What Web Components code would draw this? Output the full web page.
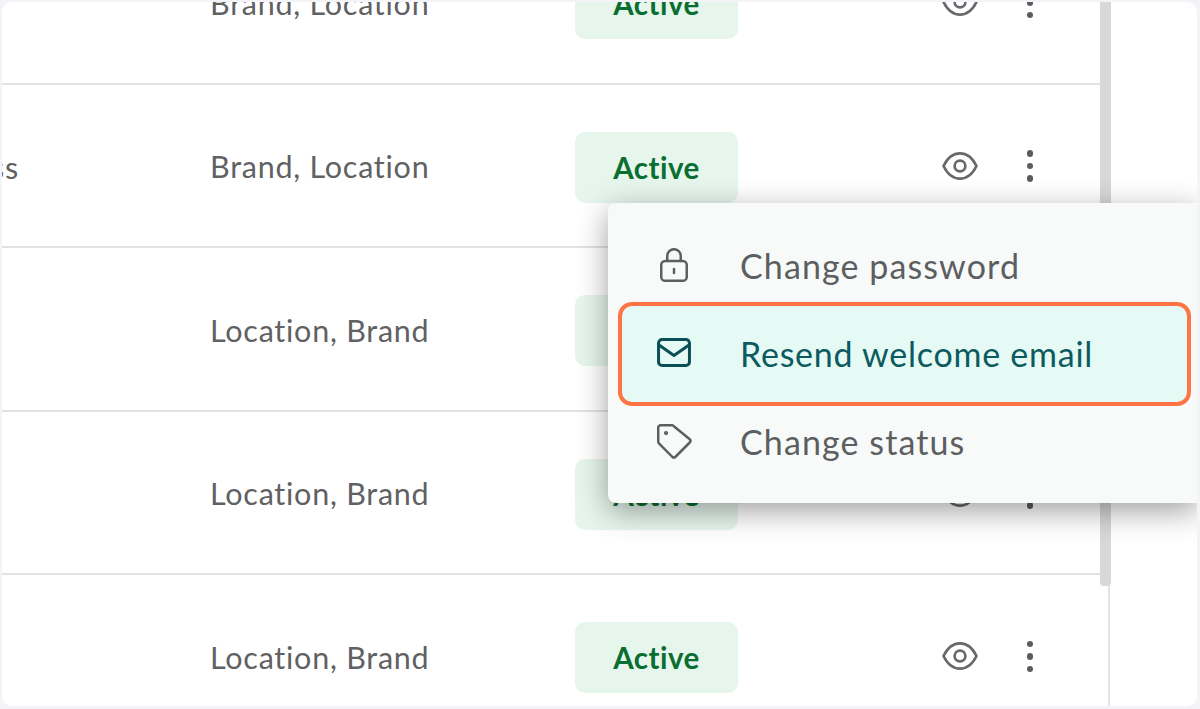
<!DOCTYPE html>
<html>
<head>
<meta charset="utf-8">
<style>
  html, body { margin: 0; height: 100%; overflow: hidden; background: #f3f3f8; }
  body { font-family: "Lato", "Open Sans", sans-serif; }
</style>
</head>
<body>
<app-frame>
  <user-row roles="Brand, Location"></user-row>
  <user-row lead="ss" roles="Brand, Location"></user-row>
  <user-row roles="Location, Brand"></user-row>
  <user-row roles="Location, Brand"></user-row>
  <user-row roles="Location, Brand"></user-row>
  <action-menu slot="menu">
    <menu-item icon="lock">Change password</menu-item>
    <menu-item icon="mail" highlighted>Resend welcome email</menu-item>
    <menu-item icon="tag">Change status</menu-item>
  </action-menu>
</app-frame>

<script>
// Icons shared by the rows and the menu, all on a 24 box
const ICONS = {
  eye: `<path d="M1.6 12C4.2 6.6 7.8 4 12 4s7.8 2.6 10.4 8c-2.6 5.4-6.2 8-10.4 8S4.2 17.4 1.6 12z"/><circle cx="12" cy="12" r="3.4"/>`,
  lock: `<rect x="3.5" y="8.7" width="17" height="13.2" rx="2.6"/><path d="M7.5 8.7V5.3a4.5 4.5 0 0 1 9 0v3.4"/><path d="M12 14v2.6"/>`,
  mail: `<rect x="1.7" y="2.3" width="20.6" height="17.4" rx="2.4"/><path d="M2 6l10 7 10-7"/>`,
  tag: `<path d="M1.5 3A1.5 1.5 0 0 1 3 1.5h7.6a1.5 1.5 0 0 1 1.1.45l10.8 8.85a1.6 1.6 0 0 1 0 2.2L13 22.5a1.6 1.6 0 0 1-2.2 0L1.95 13.6a1.5 1.5 0 0 1-.45-1.1z"/><circle cx="6.7" cy="6.7" r=".6"/>`
};

function icon(name, size, stroke) {
  return `<svg width="${size}" height="${size}" viewBox="0 0 24 24" fill="none" stroke="currentColor" stroke-width="${stroke}" stroke-linecap="round" stroke-linejoin="round">${ICONS[name]}</svg>`;
}

class AppFrame extends HTMLElement {
  constructor() {
    super();
    this.attachShadow({ mode: "open" }).innerHTML = `
      <style>
        :host { display: block; box-sizing: border-box; height: 709px; padding: 2px 3px 3px 2px; }
        .card { position: relative; height: 100%; background: #fff; border-radius: 10px; overflow: hidden; }
        .table { width: 1108px; height: 100%; box-sizing: border-box; border-right: 2px solid #e4e4e4; overflow: hidden; }
        .rows { margin-top: -81px; }
        .scrollbar { position: absolute; left: 1098px; top: 0; width: 11px; height: 584px; background: #d8d8d8; border-radius: 0 0 4px 4px; }
        .menu { position: absolute; left: 606px; top: 201px; }
      </style>
      <div class="card">
        <div class="table"><div class="rows"><slot></slot></div></div>
        <div class="scrollbar"></div>
        <div class="menu"><slot name="menu"></slot></div>
      </div>
    `;
  }
}

class UserRow extends HTMLElement {
  constructor() {
    super();
    this.attachShadow({ mode: "open" });
  }

  connectedCallback() {
    const lead = this.getAttribute("lead") || "";
    const roles = this.getAttribute("roles") || "";
    this.shadowRoot.innerHTML = `
      <style>
        :host { display: grid; grid-template-columns: 208px 365px 163px 1fr; align-items: center; box-sizing: border-box; height: 163.5px; padding-top: 4px; border-bottom: 2px solid #e2e2e2; color: #5f6163; font-size: 30.5px; letter-spacing: .75px; }
        .lead { margin-left: -11px; margin-top: -1px; }
        .roles { margin-top: -2px; }
      </style>
      <div class="lead">${lead}</div>
      <div class="roles">${roles}</div>
      <status-badge>Active</status-badge>
      <row-actions></row-actions>
    `;
  }
}

class StatusBadge extends HTMLElement {
  constructor() {
    super();
    this.attachShadow({ mode: "open" }).innerHTML = `
      <style>
        :host { display: flex; align-items: center; justify-content: center; height: 71px; background: #e6f6ed; border-radius: 10px; color: #0a6e30; font-size: 29.5px; font-weight: 700; letter-spacing: .5px; }
      </style>
      <slot></slot>
    `;
  }
}

class RowActions extends HTMLElement {
  constructor() {
    super();
    this.attachShadow({ mode: "open" }).innerHTML = `
      <style>
        :host { display: flex; align-items: center; gap: 37px; padding-left: 203px; margin-top: -3px; color: #67696c; }
        svg { display: block; }
        .dots { display: flex; flex-direction: column; gap: 6px; }
        .dots i { width: 6.5px; height: 6.5px; border-radius: 50%; background: #5a5c60; }
        .more { width: 28px; display: flex; justify-content: center; }
      </style>
      ${icon("eye", 38, 1.7)}
      <div class="more"><div class="dots"><i></i><i></i><i></i></div></div>
    `;
  }
}

class ActionMenu extends HTMLElement {
  constructor() {
    super();
    this.attachShadow({ mode: "open" }).innerHTML = `
      <style>
        :host { display: flex; flex-direction: column; box-sizing: border-box; width: 590px; height: 300px; padding: 19px 7px 0 10px; background: #f8faf9; border-radius: 8px 0 0 8px; box-shadow: 0 8px 30px rgba(0,0,0,.38); }
      </style>
      <slot></slot>
    `;
  }
}

class MenuItem extends HTMLElement {
  constructor() {
    super();
    this.attachShadow({ mode: "open" });
  }

  connectedCallback() {
    this.shadowRoot.innerHTML = `
      <style>
        :host { display: flex; align-items: center; box-sizing: border-box; height: 88px; padding: 0 0 2px 38px; gap: 48px; color: #5c5f61; font-size: 34px; letter-spacing: 1.1px; white-space: nowrap; }
        :host([highlighted]) { height: 104px; margin: -8px 0; position: relative; padding-left: 34px; border: 4px solid #ff7445; border-radius: 14px; background: #e6faf5; color: #0c5a60; letter-spacing: .75px; }
        :host([highlighted]) svg { color: #0a4f57; }
        svg { display: block; flex: none; margin-top: 2px; }
        :host([icon="tag"]) svg { margin-top: 0; }
      </style>
      ${icon(this.getAttribute("icon"), 36, this.hasAttribute("highlighted") ? 2 : 1.65)}
      <slot></slot>
    `;
  }
}

customElements.define("app-frame", AppFrame);
customElements.define("user-row", UserRow);
customElements.define("status-badge", StatusBadge);
customElements.define("row-actions", RowActions);
customElements.define("action-menu", ActionMenu);
customElements.define("menu-item", MenuItem);
</script>
</body>
</html>
